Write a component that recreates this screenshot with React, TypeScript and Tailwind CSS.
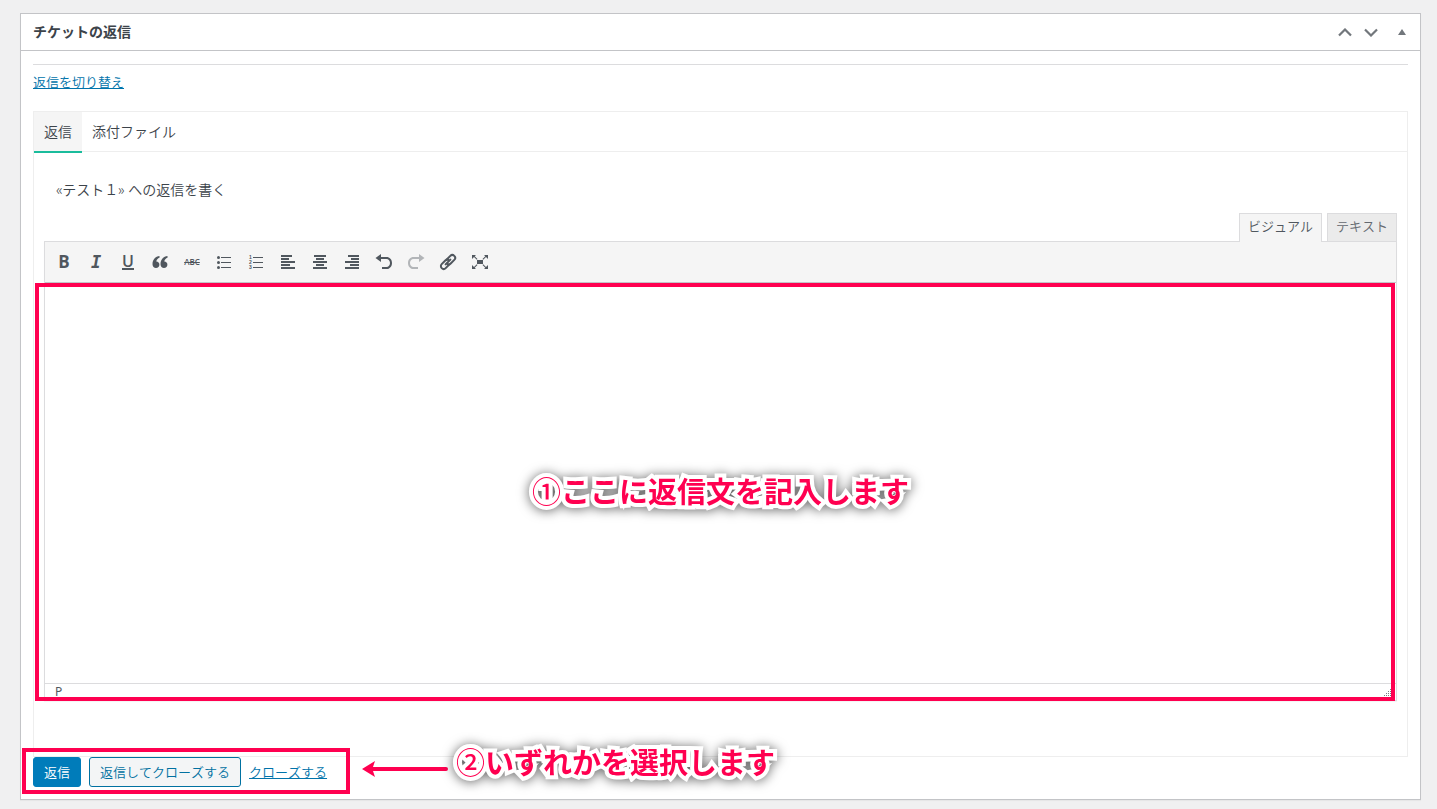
import React from 'react';

interface ToolButtonProps {
  label: string;
  disabled?: boolean;
  children: React.ReactNode;
}

const ToolButton: React.FC<ToolButtonProps> = ({ label, disabled, children }) => (
  <button
    type="button"
    aria-label={label}
    disabled={disabled}
    className="w-8 h-8 flex items-center justify-center text-[#50575e] disabled:opacity-40"
  >
    {children}
  </button>
);

const Icon: React.FC<{ children: React.ReactNode }> = ({ children }) => (
  <svg viewBox="0 0 20 20" className="w-5 h-5" fill="currentColor" aria-hidden="true">
    {children}
  </svg>
);

const AlignIcon: React.FC<{ rows: [number, number][] }> = ({ rows }) => (
  <Icon>
    {rows.map(([x, width], i) => (
      <rect key={i} x={x} y={3 + i * 3} width={width} height="2" />
    ))}
  </Icon>
);

const Callout: React.FC<{ mark: string; children: React.ReactNode }> = ({ mark, children }) => (
  <span className="text-[29px] leading-10 font-bold text-[#ff0050] whitespace-nowrap [-webkit-text-stroke:8px_white] [paint-order:stroke_fill] [stroke-linejoin:round] [filter:drop-shadow(0_1px_6px_rgba(0,0,0,0.6))]">
    <span className="font-medium">{mark}</span>
    {children}
  </span>
);

const Toolbar: React.FC = () => (
  <div role="toolbar" className="h-[41px] flex items-center px-[3px] bg-[#f5f5f5] border-b border-[#c3c4c7]">
    <ToolButton label="太字">
      <span className="font-['Open_Sans'] font-bold text-[17px] leading-5">B</span>
    </ToolButton>
    <ToolButton label="イタリック">
      <span className="font-['DejaVu_Sans_Mono'] font-bold italic text-[17px] leading-5">I</span>
    </ToolButton>
    <ToolButton label="下線">
      <span className="font-['Open_Sans'] font-semibold text-base leading-[13px] border-b-2 border-current">U</span>
    </ToolButton>
    <ToolButton label="引用">
      <Icon>
        <path d="M9.500 4C5.500 4.400 2.500 7.600 2.500 12.200C2.500 14.600 4 16 6 16C8 16 9.400 14.600 9.400 12.700C9.400 10.900 8.200 9.700 6.300 9.600C6.500 7.600 7.800 6.400 9.500 5.800Z" />
        <path d="M17.500 4C13.500 4.400 10.500 7.600 10.500 12.200C10.500 14.600 12 16 14 16C16 16 17.400 14.600 17.400 12.700C17.400 10.900 16.200 9.700 14.300 9.600C14.500 7.600 15.800 6.400 17.500 5.800Z" />
      </Icon>
    </ToolButton>
    <ToolButton label="打ち消し">
      <span className="font-['Open_Sans'] font-semibold text-[8px] leading-3 line-through">ABC</span>
    </ToolButton>
    <ToolButton label="番号なしリスト">
      <Icon>
        <circle cx="4.500" cy="5.500" r="1.500" />
        <circle cx="4.500" cy="10.500" r="1.500" />
        <circle cx="4.500" cy="15.500" r="1.500" />
        <path d="M7 5h10v1H7zM7 10h10v1H7zM7 15h10v1H7z" />
      </Icon>
    </ToolButton>
    <ToolButton label="番号付きリスト">
      <Icon>
        <g fontSize="5" fontFamily="Liberation Sans, sans-serif" fontWeight="bold">
          <text x="3" y="7">1</text>
          <text x="3" y="12">2</text>
          <text x="3" y="17">3</text>
        </g>
        <path d="M7 5h10v1H7zM7 10h10v1H7zM7 15h10v1H7z" />
      </Icon>
    </ToolButton>
    <ToolButton label="左寄せ">
      <AlignIcon rows={[[3, 11], [3, 8], [3, 14], [3, 9], [3, 14]]} />
    </ToolButton>
    <ToolButton label="中央揃え">
      <AlignIcon rows={[[4, 12], [6, 8], [3, 14], [6, 8], [3, 14]]} />
    </ToolButton>
    <ToolButton label="右寄せ">
      <AlignIcon rows={[[6, 11], [9, 8], [3, 14], [8, 9], [3, 14]]} />
    </ToolButton>
    <ToolButton label="取り消し">
      <Icon>
        <path d="M7 2v3h5.500c3.200 0 5.500 2.500 5.500 5.900s-2.300 6.100-5.500 6.100H8v-2h4.500c2.100 0 3.500-1.800 3.500-4S14.600 7 12.500 7H7v3L1.500 6z" />
      </Icon>
    </ToolButton>
    <ToolButton label="やり直し" disabled>
      <Icon>
        <path d="M13 2v3H7.500C4.300 5 2 7.500 2 10.900S4.300 17 7.500 17H12v-2H7.500c-2.100 0-3.500-1.800-3.500-4S5.400 7 7.500 7H13v3l5.500-4z" />
      </Icon>
    </ToolButton>
    <ToolButton label="リンクの挿入">
      <Icon>
        <g fill="none" stroke="currentColor" strokeWidth="2" strokeLinecap="round">
          <path d="M9 7.200l3.300-3.300a2.700 2.700 0 0 1 4 4l-3.600 3.600a2.700 2.700 0 0 1-3.600.2" />
          <path d="M11 12.800l-3.300 3.300a2.700 2.700 0 0 1-4-4l3.600-3.600a2.700 2.700 0 0 1 3.600-.2" />
          <path d="M7.600 12.400l4.800-4.800" />
        </g>
      </Icon>
    </ToolButton>
    <ToolButton label="集中執筆モード">
      <Icon>
        <path d="M7 8h6v4H7z" />
        <path d="M2 3h4L4.700 4.300 7.500 7l-.7.700L4 5 2 7zM18 3h-4l1.300 1.300L12.500 7l.7.700L16 5l2 2zM2 17h4l-1.300-1.300L7.500 13l-.7-.7L4 15l-2-2zM18 17h-4l1.300-1.300L12.500 13l.7-.7L16 15l2-2z" />
      </Icon>
    </ToolButton>
  </div>
);

const Editor: React.FC = () => (
  <div>
    <div className="h-7 flex justify-end items-start gap-[5px] text-[13px] leading-6">
      <button type="button" className="relative z-10 h-[29px] px-2 pb-1 bg-[#f5f5f5] border border-b-0 border-[#dcdcde] text-[#50575e]">
        ビジュアル
      </button>
      <button type="button" className="h-7 px-2 pb-1 bg-[#ebebeb] border border-b-0 border-[#dcdcde] text-[#646970]">
        テキスト
      </button>
    </div>
    <div className="border border-[#dcdcde] shadow-[0_1px_1px_rgba(0,0,0,0.04)]">
      <Toolbar />
      <div className="relative">
        <textarea aria-label="返信文" className="block w-full h-[400px] resize-none outline-none bg-white p-2.5" />
        <div className="h-[17px] flex justify-between border-t border-[#dcdcde] pl-2.5 pr-1 text-xs leading-4 font-normal text-[#50575e]">
          <span>P</span>
          <svg viewBox="0 0 10 10" className="w-2.5 h-2.5 mt-1" fill="#787c82" aria-hidden="true">
            <path d="M8 1h1v1H8zM6 3h1v1H6zM8 3h1v1H8zM4 5h1v1H4zM6 5h1v1H6zM8 5h1v1H8zM2 7h1v1H2zM4 7h1v1H4zM6 7h1v1H6zM8 7h1v1H8z" />
          </svg>
        </div>
        <div className="absolute -left-2.5 right-px top-0 -bottom-px border-4 border-[#ff0050] pointer-events-none" />
        <div className="absolute inset-0 flex items-center justify-center pointer-events-none">
          <Callout mark="①">ここに返信文を記入します</Callout>
        </div>
      </div>
    </div>
  </div>
);

const App: React.FC = () => {
  return (
    <div className="min-h-screen bg-[#f0f0f1] pt-[13px] pb-[9px] pl-5 pr-4 text-[#3c434a] font-[350] [font-kerning:none] font-['Noto_Sans','Noto_Sans_CJK_JP',sans-serif]">
      <section className="bg-white border border-[#c3c4c7] shadow-[0_1px_1px_rgba(0,0,0,0.04)]">
        <header className="h-[37px] flex items-center justify-between pl-3 pr-3.5 border-b border-[#c3c4c7]">
          <h2 className="text-sm font-semibold">チケットの返信</h2>
          <div className="flex items-center text-[#72777c]">
            <button type="button" aria-label="上に移動" className="w-[26px] flex justify-center">
              <svg viewBox="0 0 14 9" className="w-3.5 h-[9px]" fill="none" stroke="currentColor" strokeWidth="2.200">
                <path d="M1 7.500l6-6 6 6" />
              </svg>
            </button>
            <button type="button" aria-label="下に移動" className="w-[26px] flex justify-center">
              <svg viewBox="0 0 14 9" className="w-3.5 h-[9px]" fill="none" stroke="currentColor" strokeWidth="2.200">
                <path d="M1 1.500l6 6 6-6" />
              </svg>
            </button>
            <button type="button" aria-label="パネルを閉じる" className="ml-3.5">
              <svg viewBox="0 0 8 6" className="w-2 h-1.5" fill="currentColor">
                <path d="M4 0l4 6H0z" />
              </svg>
            </button>
          </div>
        </header>

        <div className="px-3 pt-[13px] pb-3">
          <hr className="border-[#dcdcde]" />
          <a href="#reply" className="block w-fit mt-[7px] text-[13px] leading-5 text-[#0073aa] underline">
            返信を切り替え
          </a>

          <div className="mt-[19px] border border-[#eeeeee]">
            <nav className="h-10 flex items-start border-b border-[#eeeeee] text-sm leading-10">
              <a href="#reply" className="h-[41px] px-2.5 bg-[#f5f5f5] border-b-2 border-[#1abc9c]">返信</a>
              <a href="#files" className="px-2.5">添付ファイル</a>
            </nav>
            <div className="px-2.5 pt-7 pb-[55px]">
              <h3 className="px-3 mb-[13px] text-sm leading-5 font-[350]">«テスト１» への返信を書く</h3>
              <Editor />
            </div>
          </div>

          <div className="relative w-fit flex gap-2 text-[13px] leading-7">
            <button type="submit" className="h-[30px] px-2.5 rounded-[3px] border border-[#007cba] bg-[#007cba] text-white">
              返信
            </button>
            <button type="submit" className="h-[30px] px-2.5 rounded-[3px] border border-[#0071a1] bg-[#f3f5f6] text-[#0071a1]">
              返信してクローズする
            </button>
            <a href="#close" className="leading-[30px] text-[#0073aa] underline">クローズする</a>
            <div className="absolute -left-[11px] -right-[23px] -top-[9px] -bottom-[7px] border-4 border-[#ff0050] pointer-events-none" />
            <div className="absolute left-full -top-3.5 ml-[35px] flex items-start gap-2 pointer-events-none">
              <svg viewBox="0 0 86 16" className="w-[86px] h-4 mt-[18px]" fill="#ff0050" aria-hidden="true">
                <path d="M0 8L13 0L11 6H84a2 2 0 0 1 0 4H11l2 6z" />
              </svg>
              <Callout mark="②">いずれかを選択します</Callout>
            </div>
          </div>
        </div>
      </section>
    </div>
  );
};

export default App;
